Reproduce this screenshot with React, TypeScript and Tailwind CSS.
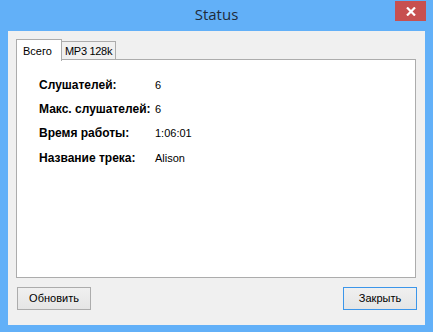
import React from "react";

const rows: [string, string][] = [
  ["Слушателей:", "6"],
  ["Макс. слушателей:", "6"],
  ["Время работы:", "1:06:01"],
  ["Название трека:", "Alison"],
];

export default function App() {
  return (
    <div
      className="w-[433px] h-[332px] bg-[#62b0f8] flex flex-col overflow-hidden"
      style={{ fontFamily: '"Liberation Sans", Arial, sans-serif' }}
    >
      {/* Title bar */}
      <div className="relative h-[31px] flex-none">
        <div
          className="absolute left-0 right-0 top-[4px] text-center text-[15px] leading-[20px] text-[#1f2b3a]"
          style={{ fontFamily: '"Open Sans", "Noto Sans", sans-serif' }}
        >
          Status
        </div>
        <div className="absolute left-[395px] top-[1px] w-[31px] h-[20px] bg-[#c75050] flex items-center justify-center">
          <svg width="10" height="9" viewBox="0 0 10 9">
            <path d="M1 0.5 L9 8.5 M9 0.5 L1 8.5" stroke="#ffffff" strokeWidth="2.2" />
          </svg>
        </div>
      </div>
      {/* Client area */}
      <div className="ml-[8px] mr-[8px] h-[294px] bg-[#f0f0f0] flex flex-col pt-[8px] pb-[15px] text-[11px] text-black">
        {/* Tabs */}
        <div className="h-[20px] flex items-end ml-[8px]">
          <div className="relative z-10 h-[22px] -mb-[2px] w-[46px] bg-white border border-b-0 border-[#acacac] pl-[6px] pt-[5px] leading-[13px]">
            Всего
          </div>
          <div className="h-[18px] w-[54px] bg-[#f0f0f0] border border-l-0 border-b-0 border-[#acacac] pl-[3px] pt-[3px] leading-[13px] whitespace-nowrap tracking-[-0.3px]">
            MP3 128k
          </div>
        </div>
        {/* Panel */}
        <div className="ml-[8px] mr-[9px] h-[219px] bg-white border border-[#acacac] pt-[13px] pl-[22px]">
          {rows.map(([label, value]) => (
            <div key={label} className="h-[24.3px] flex items-center leading-[13px]">
              <div className="w-[116px] font-bold text-[12px]">{label}</div>
              <div>{value}</div>
            </div>
          ))}
        </div>
        {/* Buttons */}
        <div className="mt-[9px] flex justify-between pl-[9px] pr-[8px]">
          <button className="w-[74px] h-[23px] border border-[#acacac] bg-gradient-to-b from-[#f0f0f0] to-[#e5e5e5] text-[11px] text-black">
            Обновить
          </button>
          <button className="w-[74px] h-[23px] border border-[#3c96ea] bg-gradient-to-b from-[#f0f0f0] to-[#e5e5e5] text-[11px] text-black">
            Закрыть
          </button>
        </div>
      </div>
    </div>
  );
}
